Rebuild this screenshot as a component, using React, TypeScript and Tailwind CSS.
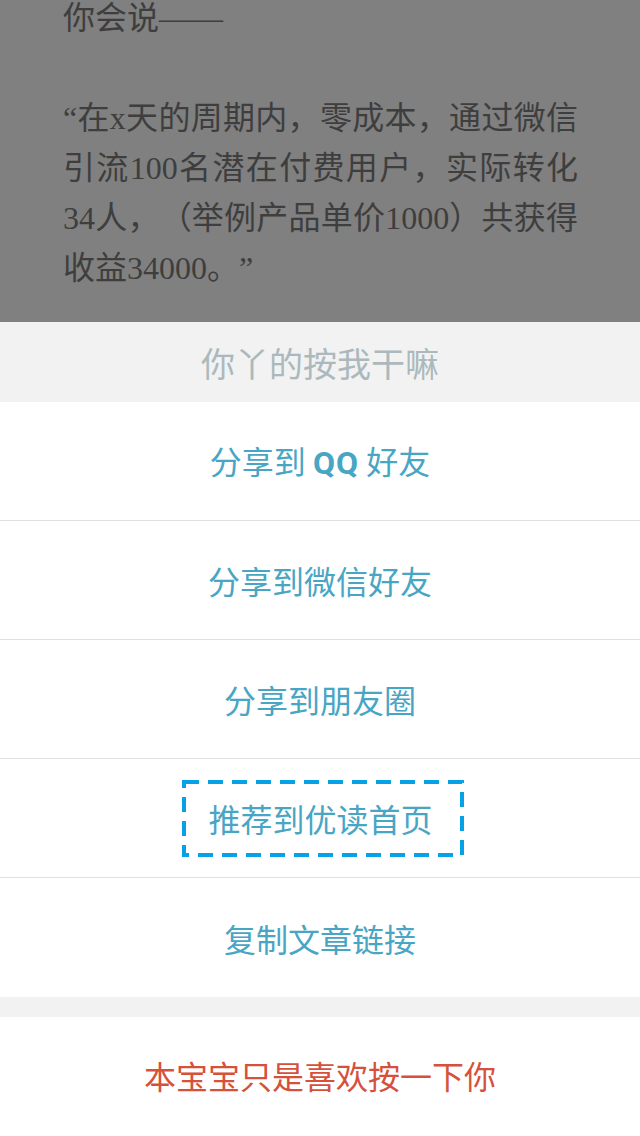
const articleLines = [
  { text: "你会说——", justify: false },
  { text: "", justify: false },
  { text: "“在x天的周期内，零成本，通过微信", justify: true },
  { text: "引流100名潜在付费用户，实际转化", justify: true },
  { text: "34人，（举例产品单价1000）共获得", justify: true },
  { text: "收益34000。”", justify: false },
];

function DashedFrame() {
  return (
    <svg className="absolute inset-0" width="282" height="77" viewBox="0 0 282 77" fill="none">
      <rect x="2" y="2" width="278" height="73" stroke="#07a2e6" strokeWidth="4" strokeDasharray="15 9" />
    </svg>
  );
}

function SheetRow({ children, last }: { children: React.ReactNode; last?: boolean }) {
  return (
    <div
      className={`flex items-center justify-center bg-white text-[32px] text-[#48a5c4] ${
        last ? "h-[119px]" : "h-[119px] border-b border-[#e0e0e0]"
      }`}
    >
      {children}
    </div>
  );
}

export default function App() {
  return (
    <div className="w-[640px] h-[1136px] overflow-hidden bg-white flex flex-col font-['Noto_Sans_CJK_SC',sans-serif]">
      {/* dimmed article behind the sheet */}
      <div className="h-[322px] shrink-0 overflow-hidden bg-[#808080] pl-[63px] text-[32px] leading-[50px] text-[#3e3e3e] font-['Liberation_Serif','Noto_Sans_CJK_SC',serif] [text-spacing-trim:space-all]">
        <div className="-mt-[7px] w-[515px]">
          {articleLines.map((line, i) => (
            <div
              key={i}
              className={`h-[50px] whitespace-nowrap ${line.justify ? "text-justify [text-align-last:justify]" : ""}`}
            >
              {line.text}
            </div>
          ))}
        </div>
      </div>

      {/* action sheet */}
      <div className="h-[80px] shrink-0 bg-[#f2f2f2] flex items-center justify-center text-[34px] text-[#abb9bd]">
        你丫的按我干嘛
      </div>

      <SheetRow>
        <span>
          分享到 <span className="font-['Roboto',sans-serif] font-bold tracking-[1px]">QQ</span> 好友
        </span>
      </SheetRow>
      <SheetRow>分享到微信好友</SheetRow>
      <SheetRow>分享到朋友圈</SheetRow>
      <SheetRow>
        <div className="relative w-[282px] h-[77px] ml-[5px] flex items-center justify-center">
          <DashedFrame />
          <span className="-ml-[4px]">推荐到优读首页</span>
        </div>
      </SheetRow>
      <SheetRow last>复制文章链接</SheetRow>

      <div className="h-[20px] shrink-0 bg-[#f2f2f2]" />

      <div className="flex-1 bg-white flex items-center justify-center text-[32px] text-[#d6513b] pb-[4px]">
        本宝宝只是喜欢按一下你
      </div>
    </div>
  );
}
